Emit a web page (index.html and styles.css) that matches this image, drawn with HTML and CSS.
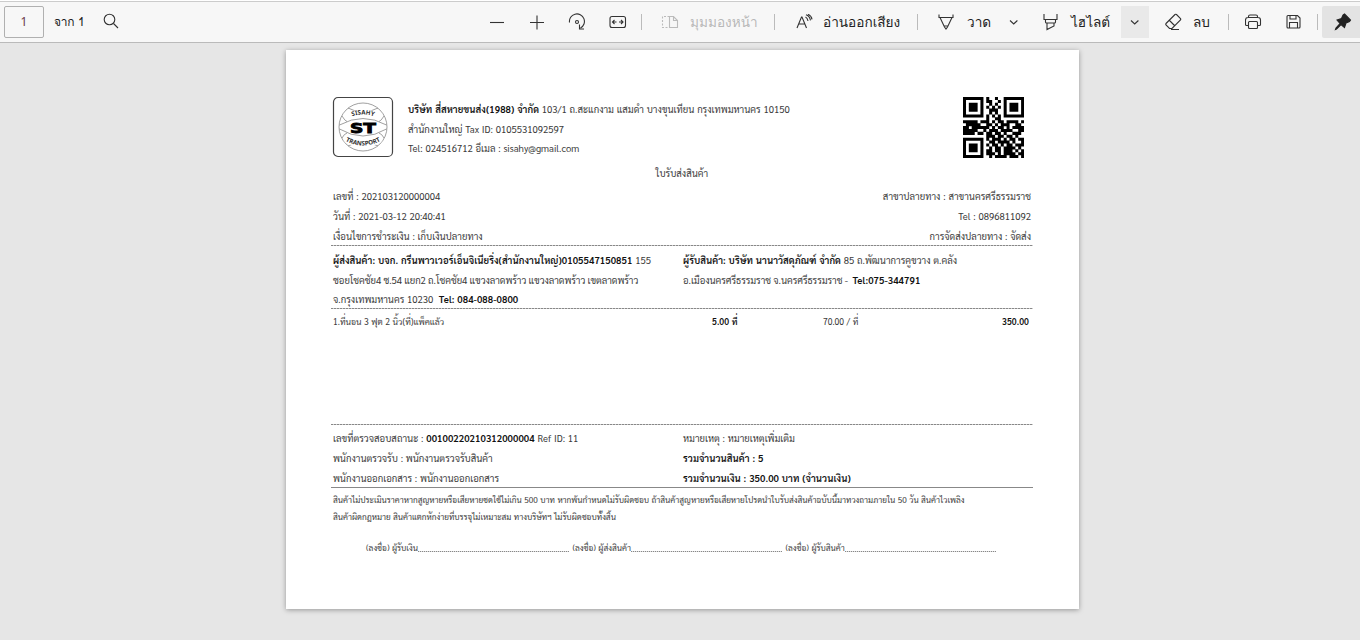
FILE: index.html
```html
<!DOCTYPE html>
<html lang="th">
<head>
<meta charset="utf-8">
<title>ใบรับส่งสินค้า</title>
<link rel="stylesheet" href="styles.css">
</head>
<body>
<header class="toolbar">
  <div class="page-box">1</div>
  <span class="label small">จาก 1</span>
  <svg width="18" height="18" viewBox="0 0 18 18"><circle cx="6.500" cy="6.500" r="5.300"/><path d="M10.500 10.500l4.500 4.500"/></svg>
  <svg width="16" height="16" viewBox="0 0 16 16"><path d="M0 8.500h14"/></svg>
  <svg width="16" height="16" viewBox="0 0 16 16"><path d="M0 8.500h14M7 1.500v14"/></svg>
  <svg width="20" height="18" viewBox="0 0 20 18"><path d="M1.500 9.500a7.500 7.500 0 1 1 11 5.500M11.500 11.500v4.500h4.500"/><circle cx="9" cy="9" r="1.500"/></svg>
  <svg width="18" height="16" viewBox="0 0 18 16"><rect x="1" y="2.500" width="15.500" height="11" rx="2"/><path d="M3.500 8h4M10 8h4M5.500 6L3.500 8l2 2M12 6l2 2-2 2"/></svg>
  <i class="sep"></i>
  <svg class="off" width="18" height="16" viewBox="0 0 18 16"><path d="M8.500 2.500h4l4 4v7h-8zM12.500 2.500v4h4"/><path stroke-dasharray="2 1.500" d="M8.500 2.500H1.500v11h7"/></svg>
  <span class="label off">มุมมองหน้า</span>
  <i class="sep"></i>
  <svg width="18" height="16" viewBox="0 0 18 16"><path d="M1 14L5.500 3h.5l4.500 11M2.700 10h6.200M9.500 3q2 1 2.500 4M10 .8q3.500 1 4.500 5.500M12 .3q3.500 1.500 4 5"/></svg>
  <span class="label">อ่านออกเสียง</span>
  <i class="sep"></i>
  <svg width="18" height="18" viewBox="0 0 18 18"><path d="M1 1.500v3h14v-3M2 4.500l4.500 9.500 1.500 2 1.500-2L14 4.500M6 13h4"/></svg>
  <span class="label">วาด</span>
  <svg width="10" height="8" viewBox="0 0 10 8"><path d="M1 2.500l3.700 3.500 3.700-3.500"/></svg>
  <svg width="18" height="18" viewBox="0 0 18 18"><path d="M1 1v5.500h13V1M2.500 6.500V9q0 1 1 1h8q1 0 1-1V6.500M4 10v6.500l7-3.500v-3"/></svg>
  <span class="label">ไฮไลต์</span>
  <div class="drop"><svg width="10" height="8" viewBox="0 0 10 8"><path d="M1 2.500l3.700 3.500 3.700-3.500"/></svg></div>
  <svg width="18" height="18" viewBox="0 0 18 18"><path d="M1 10.500L10 1.500q.8-.5 1.500 0l4 4q.5.700 0 1.500L7 15.500H4.500L1 12q-.5-.8 0-1.500zM4.500 7.500L10 13M6 16.500h8"/></svg>
  <span class="label">ลบ</span>
  <i class="sep"></i>
  <svg width="18" height="18" viewBox="0 0 18 18"><path d="M3.500 4.500v-1q0-1.500 1.500-1.500h6q1.500 0 1.500 1.500v1M3.500 12.500H1.500q-1 0-1-1V7q0-2.500 2.500-2.500h10q2.500 0 2.500 2.500v4.500q0 1-1 1h-2"/><rect x="3.500" y="8.500" width="9" height="7" rx="1"/></svg>
  <svg width="16" height="16" viewBox="0 0 16 16"><path d="M2 1.500h9.500l2.500 2.500v9q0 1-1 1H2q-1 0-1-1V2.500q0-1 1-1zM4 1.500V5h6V1.500M3.500 14V8.500h8V14"/></svg>
  <i class="sep"></i>
  <div class="pin"><svg width="18" height="18" viewBox="0 0 18 18"><path class="solid" d="M10.500 1l6 6-1 1.500-3.500 1.500-1.500 4.500-3.500-3-4.500 4.500-1 .5.500-1.500 4-4.500L3 7l4.500-1.500L9 2z"/></svg></div>
</header>
<main class="paper">
  <section class="head">
    <svg class="logo" width="62" height="62" viewBox="0 0 62 62">
      <rect x="1.500" y="1.500" width="59" height="59" rx="4.500" class="frame"/>
      <g class="globe"><circle cx="31" cy="31" r="24"/><path d="M7.500 29q23.500-13 47 0M7.500 33q23.500 14 47 0M10 20q3 5 5 5.500M52 20q-3 5-5 5.500M10 42q2-4 5-5M52 42q-2-4-5-5M16 12q15 8 30 0M16 50q15-8 30 0"/></g>
      <path class="band" d="M18 19.500q13-5 26 0M14 43q17 9 34 0"/>
      <path id="top" class="guide" d="M14 23q17-9 34 0"/>
      <path id="bottom" class="guide" d="M10 43q21 13 42 0"/>
      <text class="arc"><textPath href="#top" startOffset="50%">SISAHY</textPath></text>
      <text class="arc"><textPath href="#bottom" startOffset="50%">TRANSPORT</textPath></text>
      <text class="st" x="31" y="36.500" textLength="26" lengthAdjust="spacingAndGlyphs">ST</text>
    </svg>
    <div class="company">
      <p><b>บริษัท สี่สหายขนส่ง(1988) จำกัด</b> 103/1 ถ.สะแกงาม แสมดำ บางขุนเทียน กรุงเทพมหานคร 10150</p>
      <p>สำนักงานใหญ่ Tax ID: 0105531092597</p>
      <p>Tel: 024516712 อีเมล : sisahy@gmail.com</p>
    </div>
    <svg class="qr" id="qr" width="61" height="61" viewBox="0 0 21 21"></svg>
  </section>
  <h1>ใบรับส่งสินค้า</h1>
  <section class="split ruled">
    <div><p>เลขที่ : 202103120000004</p><p>วันที่ : 2021-03-12 20:40:41</p><p>เงื่อนไขการชำระเงิน : เก็บเงินปลายทาง</p></div>
    <div class="right"><p>สาขาปลายทาง : สาขานครศรีธรรมราช</p><p>Tel : 0896811092</p><p>การจัดส่งปลายทาง : จัดส่ง</p></div>
  </section>
  <section class="split ruled parties">
    <div><p><b>ผู้ส่งสินค้า: บจก. กรีนพาวเวอร์เอ็นจิเนียริ่ง(สำนักงานใหญ่)0105547150851</b> 155</p><p class="tight">ซอยโชคชัย4 ซ.54 แยก2 ถ.โชคชัย4 แขวงลาดพร้าว แขวงลาดพร้าว เขตลาดพร้าว</p><p>จ.กรุงเทพมหานคร 10230 &nbsp;<b>Tel: 084-088-0800</b></p></div>
    <div><p><b>ผู้รับสินค้า: บริษัท นานาวัสดุภัณฑ์ จำกัด</b> 85 ถ.พัฒนาการคูขวาง ต.คลัง</p><p class="tight">อ.เมืองนครศรีธรรมราช จ.นครศรีธรรมราช - &nbsp;<b>Tel:075-344791</b></p></div>
  </section>
  <section class="items ruled">
    <p>1.ที่นอน 3 ฟุต 2 นิ้ว(ที่)แพ็คแล้ว</p><b>5.00 ที่</b><span>70.00 / ที่</span><b class="right">350.00</b>
  </section>
  <section class="split totals">
    <div><p>เลขที่ตรวจสอบสถานะ : <b>00100220210312000004</b> Ref ID: 11</p><p>พนักงานตรวจรับ : พนักงานตรวจรับสินค้า</p><p>พนักงานออกเอกสาร : พนักงานออกเอกสาร</p></div>
    <div><p>หมายเหตุ : หมายเหตุเพิ่มเติม</p><p><b>รวมจำนวนสินค้า : 5</b></p><p><b>รวมจำนวนเงิน : 350.00 บาท (จำนวนเงิน)</b></p></div>
  </section>
  <section class="terms">
    <p>สินค้าไม่ประเมินราคาหากสูญหายหรือเสียหายชดใช้ไม่เกิน 500 บาท หากพ้นกำหนดไม่รับผิดชอบ ถ้าสินค้าสูญหายหรือเสียหายโปรดนำใบรับส่งสินค้าฉบับนี้มาทวงถามภายใน 50 วัน สินค้าไวเพลิง</p>
    <p>สินค้าผิดกฎหมาย สินค้าแตกหักง่ายที่บรรจุไม่เหมาะสม ทางบริษัทฯ ไม่รับผิดชอบทั้งสิ้น</p>
  </section>
  <section class="signs">
    <span>(ลงชื่อ) ผู้รับเงิน<i></i></span><span>(ลงชื่อ) ผู้ส่งสินค้า<i></i></span><span>(ลงชื่อ) ผู้รับสินค้า<i></i></span>
  </section>
</main>
<script src="qr.js"></script>
</body>
</html>
```

FILE: styles.css
```css
* { box-sizing: border-box; }
body { margin: 0; height: 640px; overflow: hidden; background: #e6e6e6; color: #3c3c3c; }
p, h1 { margin: 0; }
.toolbar {
  display: grid;
  grid-template-columns: 50px 49px 387px 40px 38px 41px 32px 20px 29px 84px 22px 27px 94px 21px 29px 42px 34px 28px 50px 44px 28px 35px 17px 41px 31px 5px 38px;
  align-items: center;
  height: 43px;
  padding: 1px 0 0 4px;
  background: #f7f7f7;
  border-top: 1px solid #fff;
  border-bottom: 1px solid #bababa;
  box-shadow: inset 0 1px #ccc;
}
.toolbar svg { display: block; fill: none; stroke: #333; stroke-width: 1.1; }
.toolbar svg.off { stroke: #bbb; }
.toolbar .solid { fill: #222; stroke: #222; }
.page-box { width: 40px; height: 32px; border: 1px solid #b0b0b0; border-radius: 2px; font: 12px/30px "Noto Sans", sans-serif; text-align: center; color: #6b3a4a; }
.label { font: 13.600px/30px Loma, "Noto Sans", sans-serif; white-space: nowrap; color: #222; }
.label.small { font-size: 12px; letter-spacing: -.3px; }
.label.off { color: #b8b8b8; }
.sep { width: 1px; height: 16px; background: #bbb; }
.drop, .pin { display: flex; align-items: center; height: 32px; }
.drop { width: 28px; justify-content: center; background: #e9e9e9; }
.pin { width: 38px; padding-left: 12px; background: #e3e3e3; border-radius: 2px 0 0 2px; }
.paper {
  width: 793px; height: 559px; margin: 7px 0 0 286px; padding: 46px 46px 0 45px;
  background: #fff; box-shadow: 0 1px 5px rgba(0,0,0,.35);
  font: 9.550px/19.800px Sarabun, "Noto Sans", sans-serif; word-spacing: .45px; white-space: nowrap;
}
b { color: #111; font-weight: 600; letter-spacing: .08px; }
.head { display: flex; height: 68px; padding-left: 1px; }
.company { flex: 1; margin: 4px 0 0 14px; line-height: 19.500px; }
.qr { margin: 1px 9px 0 0; }
.logo .frame { fill: #fff; stroke: #444; stroke-width: 1.2; }
.logo .globe { fill: none; stroke: #777; stroke-width: .7; }
.logo .guide { fill: none; }
.logo .band { fill: none; stroke: #fff; stroke-width: 7; }
.logo .arc { font: 700 6.200px "Noto Sans", sans-serif; word-spacing: 0; text-anchor: middle; fill: #333; }
.logo .st { font: 700 14.500px "DejaVu Sans", sans-serif; text-anchor: middle; fill: #000; stroke: #000; stroke-width: .9; }
h1 { height: 23px; font: inherit; text-align: center; }
.ruled { background: repeating-linear-gradient(90deg, #888 0 2px, #ccc 2px 3px) bottom / 100% 1px no-repeat; }
.split { display: grid; grid-template-columns: 350px 1fr; padding: 0 2px; }
.right { text-align: right; }
.ruled.split { height: 59px; }
.split.parties { height: 63px; padding-top: 5px; line-height: 19.500px; }
.tight { letter-spacing: -.05px; word-spacing: 0; }
.items { display: grid; grid-template-columns: 379px 111px 130px 1fr; height: 116px; padding: 3px 4px 0 2px; font-size: 8.600px; }
.totals { height: 63px; padding-top: 4px; border-bottom: 1px solid #888; }
.terms { padding: 3px 2px 0; font-size: 8.220px; line-height: 17.200px; }
.signs { display: flex; gap: 3px; margin: 13px 0 0 35px; font-size: 8.220px; }
.signs span { display: flex; align-items: center; }
.signs i { width: 151.500px; height: 1px; margin-top: 6px; background: repeating-linear-gradient(90deg, #888 0 1px, #ddd 1px 2px); }
```

FILE: qr.js
```js
var rows = [
  "111111101001001111111", "100000101100101000001", "101110100101001011101",
  "101110101010101011101", "101110100111001011101", "100000100101001000001",
  "111111101010101111111", "000000001001100000000", "111110111010110111101",
  "011111001101011100110", "110111111010110101111", "111110010111011110011",
  "111101101101101001110", "000000001110110110100", "111111101011101011011",
  "100000100110111101001", "101110101011010110111", "101110100101101111010",
  "101110101101101110101", "100000101110101111011", "111111100101111011101"
];
var path = "";
rows.forEach(function (row, y) {
  row.split("").forEach(function (cell, x) {
    if (cell === "1") path += "M" + x + " " + y + "h1.040v1.040h-1.040z";
  });
});
document.getElementById("qr").innerHTML = '<path d="' + path + '"/>';
```
